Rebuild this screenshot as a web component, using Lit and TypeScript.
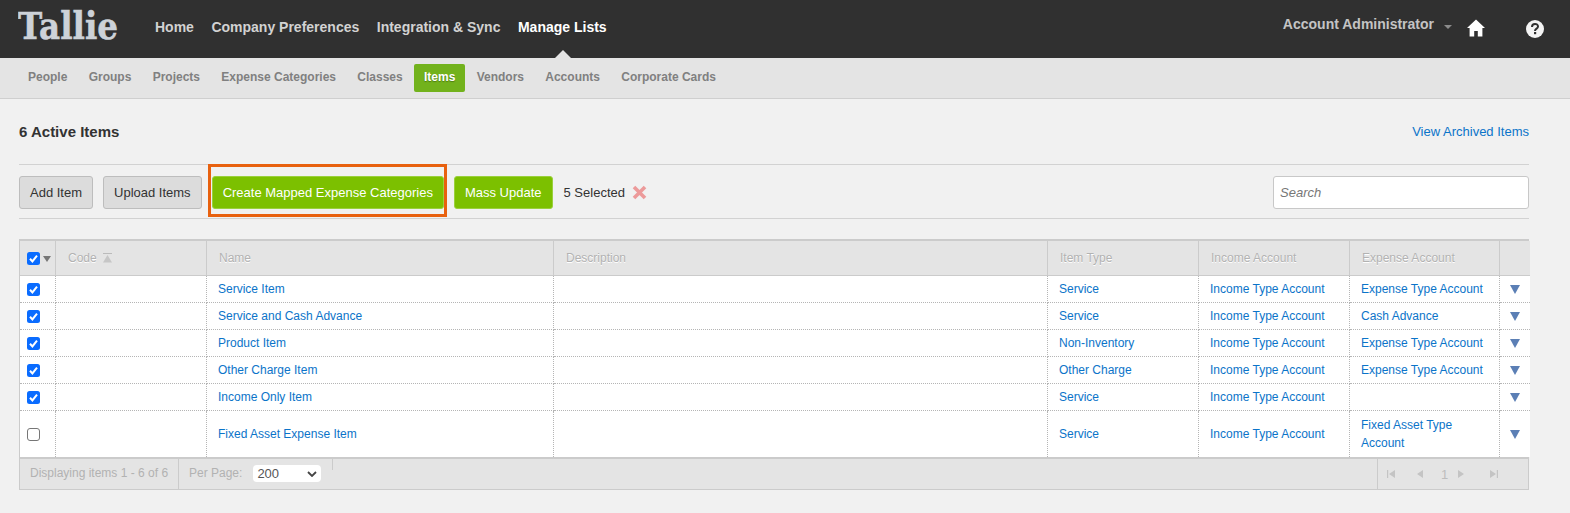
import { LitElement, html, css, svg } from "lit";
import { customElement } from "lit/decorators.js";

const MAIN = ["Home", "Company Preferences", "Integration & Sync", "Manage Lists"];
const SUB = ["People", "Groups", "Projects", "Expense Categories", "Classes", "Items", "Vendors", "Accounts", "Corporate Cards"];
const COLS = [36, 151, 347, 494, 151, 151, 150, 30];
const ROWS = [
  { on: true, name: "Service Item", type: "Service", inc: "Income Type Account", exp: "Expense Type Account" },
  { on: true, name: "Service and Cash Advance", type: "Service", inc: "Income Type Account", exp: "Cash Advance" },
  { on: true, name: "Product Item", type: "Non-Inventory", inc: "Income Type Account", exp: "Expense Type Account" },
  { on: true, name: "Other Charge Item", type: "Other Charge", inc: "Income Type Account", exp: "Expense Type Account" },
  { on: true, name: "Income Only Item", type: "Service", inc: "Income Type Account", exp: "" },
  { on: false, name: "Fixed Asset Expense Item", type: "Service", inc: "Income Type Account", exp: "Fixed Asset Type Account", tall: true },
];

const check = (on: boolean) => html`<svg class="cb" width="13" height="13" viewBox="0 0 13 13" role="checkbox" aria-checked=${on ? "true" : "false"}>
  ${on
    ? svg`<rect width="13" height="13" rx="2.5" fill="#0a6cff"/><path d="M3 6.8 5.4 9.4 10 3.6" fill="none" stroke="#fff" stroke-width="2"/>`
    : svg`<rect x=".5" y=".5" width="12" height="12" rx="2.5" fill="#fff" stroke="#767676"/>`}
</svg>`;

@customElement("app-root")
export class AppRoot extends LitElement {
  static styles = css`
    :host { display: block; min-height: 513px; background: #f1f1f1; font-family: "Liberation Sans", Arial, sans-serif; color: #333; overflow: hidden; }
    * { box-sizing: border-box; }
    a { color: #0b74c9; text-decoration: none; }

    .top { height: 58px; background: #303030; display: flex; align-items: flex-start; padding: 0 26px 0 18px; }
    .logo { width: 100px; height: 46px; margin-top: 1px; display: block; }
    .logo text { font-family: "DejaVu Serif", serif; font-weight: 700; font-size: 38px; fill: #cdd2d8; stroke: #cdd2d8; stroke-width: .6px; }
    .main { display: flex; gap: 17.5px; margin-left: 37px; padding-top: 19px; }
    .main span { position: relative; font-size: 14px; line-height: 17px; font-weight: 700; color: #d2d2d2; white-space: nowrap; }
    .main span.on { color: #fff; }
    .main span.on::after { content: ""; position: absolute; left: 37px; top: 31px; border: 8px solid transparent; border-top: 0; border-bottom-color: #e4e4e4; }
    .right { margin-left: auto; display: flex; align-items: flex-start; }
    .acct { font-size: 14px; line-height: 17px; font-weight: 700; color: #c4c4c4; margin-top: 16px; }
    .caret { width: 0; height: 0; margin: 25px 0 0 10px; border: 4px solid transparent; border-bottom: 0; border-top-color: #8c8c8c; }
    .home { margin: 19px 0 0 15px; display: block; }
    .help { margin: 20px 0 0 41px; display: block; }

    .sub { height: 41px; background: #e4e4e4; border-bottom: 1px solid #cfcfcf; display: flex; gap: 1.3px; padding: 6px 0 0 18px; }
    .sub span { height: 28px; line-height: 26px; padding: 0 10px; font-size: 12px; font-weight: 700; color: #808080; border-radius: 2px; white-space: nowrap; }
    .sub span.on { background: #72b21c; color: #fff; text-shadow: 0 1px 1px #4f7d12; }

    .page { margin: 0 41px 0 19px; }
    .title { display: flex; justify-content: space-between; align-items: center; height: 66px; border-bottom: 1px solid #d2d2d2; }
    .title h1 { margin: 0; font-size: 15px; font-weight: 700; color: #333; }
    .title a { font-size: 13px; }

    .tools { height: 54px; border-bottom: 1px solid #d2d2d2; display: flex; align-items: center; gap: 10px; padding-top: 1px; }
    .btn { height: 33px; padding: 0 10px; font: 13px/31px "Liberation Sans", Arial, sans-serif; border: 1px solid #bdbdbd; border-radius: 3px; background: #dcdcdc; color: #333; white-space: nowrap; }
    .btn.go { background: #7cc000; border-color: #9ad03c; color: #fff; }
    .mark { position: relative; display: block; }
    .mark::after { content: ""; position: absolute; left: -4px; right: -3px; top: -12px; bottom: -8px; border: 3px solid #e8610f; pointer-events: none; }
    .sel { font-size: 13px; color: #333; margin-left: 1px; }
    .x { margin-left: -3px; display: block; }
    .search { margin-left: auto; width: 256px; height: 33px; border: 1px solid #c8c8c8; border-radius: 3px; background: #fff; padding: 0 6px; font: italic 13px "Liberation Sans", Arial, sans-serif; color: #333; outline: none; }
    .search::placeholder { color: #777; }

    .grid { margin-top: 20px; border: 1px solid #cbcbcb; border-top-width: 2px; }
    table { width: 100%; border-collapse: separate; border-spacing: 0; table-layout: fixed; background: #fff; }
    th { height: 35px; background: #e4e4e4; border-right: 1px solid #cbcbcb; border-bottom: 1px solid #cbcbcb; padding: 0 0 0 12px; font-size: 12px; font-weight: 400; color: #b2b2b2; text-align: left; text-shadow: 0 1px 0 #fff; }
    th:last-child, td:last-child { border-right: 0; }
    td { height: 27px; border-right: 1px dotted #b5b5b5; border-bottom: 1px dotted #b5b5b5; padding: 0 11px; font-size: 12px; line-height: 18px; color: #333; }
    tr:last-child td { height: 46px; border-bottom: 0; }
    .cbc { padding: 0 0 0 7px; }
    .cbc .cb { display: block; }
    .allc { display: flex; align-items: center; gap: 3px; }
    .dn { width: 0; height: 0; border: 4px solid transparent; border-bottom: 0; border-top: 6px solid #777; margin-top: 2px; }
    .codec { display: flex; align-items: center; gap: 6px; }
    .rowarrow { display: block; margin-left: -1px; }

    .foot { height: 32px; background: #e4e4e4; border-top: 2px solid #cbcbcb; display: flex; align-items: flex-start; font-size: 12px; color: #b2b2b2; }
    .foot .disp { width: 159px; height: 30px; line-height: 28px; padding-left: 10px; border-right: 1px solid #cbcbcb; }
    .foot .pp { display: flex; align-items: center; height: 28px; padding-left: 10px; }
    .foot .selw { position: relative; margin-left: 11px; display: block; }
    select { appearance: none; display: block; width: 68px; height: 17px; border: 0; border-radius: 4px; background: #fff; font: 13px "Liberation Sans", Arial, sans-serif; color: #555; padding: 0 0 0 4px; }
    .chev { position: absolute; right: 4px; top: 6px; pointer-events: none; }
    .tick { width: 1px; height: 11px; background: #cbcbcb; margin-left: 11px; }
    .pager { margin-left: auto; width: 151px; height: 30px; border-left: 1px solid #cbcbcb; display: flex; align-items: center; color: #bdbdbd; position: relative; padding-left: 9px; }
    .pager svg { display: block; }
    .pager b { font-weight: 400; font-size: 13px; margin: 0 10px 0 18px; }
    .p1 { margin-right: 22px; }
    .p3 { margin-right: 26px; }
  `;

  render() {
    return html`
      <div class="top">
        <svg class="logo" viewBox="0 0 100 46" aria-label="Tallie"><text x="0" y="38" textLength="100" lengthAdjust="spacingAndGlyphs">Tallie</text></svg>
        <nav class="main">${MAIN.map((m) => html`<span class=${m === "Manage Lists" ? "on" : ""}>${m}</span>`)}</nav>
        <div class="right">
          <span class="acct">Account Administrator</span>
          <span class="caret"></span>
          <svg class="home" width="18" height="18" viewBox="0 0 18 18"><path d="M9 .5 18 9h-2.6v8.5h-4.6v-5.6H7.2v5.6H2.6V9H0z" fill="#fff"/></svg>
          <svg class="help" width="18" height="18" viewBox="0 0 18 18"><circle cx="9" cy="9" r="9" fill="#f4f4f4"/><path d="M6 7c0-4 6-4 6-.6 0 2.200-3 2.200-3 4.600" fill="none" stroke="#303030" stroke-width="2"/><rect x="8" y="12" width="2.200" height="2.200" fill="#303030"/></svg>
        </div>
      </div>
      <nav class="sub">${SUB.map((s) => html`<span class=${s === "Items" ? "on" : ""}>${s}</span>`)}</nav>
      <main class="page">
        <div class="title"><h1>6 Active Items</h1><a href="#">View Archived Items</a></div>
        <div class="tools">
          <span class="btn">Add Item</span>
          <span class="btn">Upload Items</span>
          <span class="mark"><span class="btn go" style="display:block">Create Mapped Expense Categories</span></span>
          <span class="btn go">Mass Update</span>
          <span class="sel">5 Selected</span>
          <svg class="x" width="15" height="15" viewBox="0 0 15 15"><path d="M2 2l11 11M13 2 2 13" stroke="#ec9a9a" stroke-width="3.600"/></svg>
          <input class="search" placeholder="Search" />
        </div>
        <div class="grid">
          <table>
            <colgroup>${COLS.map((w) => html`<col style="width:${w}px" />`)}</colgroup>
            <thead><tr>
              <th class="cbc"><div class="allc">${check(true)}<span class="dn"></span></div></th>
              <th><div class="codec">Code
                <svg width="9" height="10" viewBox="0 0 9 10"><path d="M0 .5h9" stroke="#bbb"/><path d="M4.500 2 9 9.500H0z" fill="#c6c6c6"/></svg></div></th>
              <th>Name</th><th>Description</th><th>Item Type</th><th>Income Account</th><th>Expense Account</th><th></th>
            </tr></thead>
            <tbody>
              ${ROWS.map((r) => html`<tr>
                <td class="cbc">${check(r.on)}</td>
                <td></td>
                <td><a href="#">${r.name}</a></td>
                <td></td>
                <td><a href="#">${r.type}</a></td>
                <td><a href="#">${r.inc}</a></td>
                <td><a href="#">${r.exp}</a></td>
                <td><svg class="rowarrow" width="10" height="9" viewBox="0 0 10 9"><path d="M0 0h10L5 9z" fill="#5b7fb5"/></svg></td>
              </tr>`)}
            </tbody>
          </table>
          <div class="foot">
            <div class="disp">Displaying items 1 - 6 of 6</div>
            <div class="pp">Per Page:
              <span class="selw">
                <select><option>200</option></select>
                <svg class="chev" width="10" height="6" viewBox="0 0 10 6"><path d="M1 1l4 4 4-4" fill="none" stroke="#444" stroke-width="1.800"/></svg>
              </span>
            </div>
            <div class="tick"></div>
            <div class="pager">
              <svg class="p1" width="8" height="8" viewBox="0 0 8 8"><path d="M0 0h1.200v8H0zM8 0v8L2 4z" fill="#c4c4c4"/></svg>
              <svg width="6" height="8" viewBox="0 0 6 8"><path d="M6 0v8L0 4z" fill="#c4c4c4"/></svg>
              <b>1</b>
              <svg class="p3" width="6" height="8" viewBox="0 0 6 8"><path d="M0 0v8l6-4z" fill="#c4c4c4"/></svg>
              <svg width="8" height="8" viewBox="0 0 8 8"><path d="M0 0v8l6-4zM6.800 0H8v8H6.800z" fill="#c4c4c4"/></svg>
            </div>
          </div>
        </div>
      </main>
    `;
  }
}
